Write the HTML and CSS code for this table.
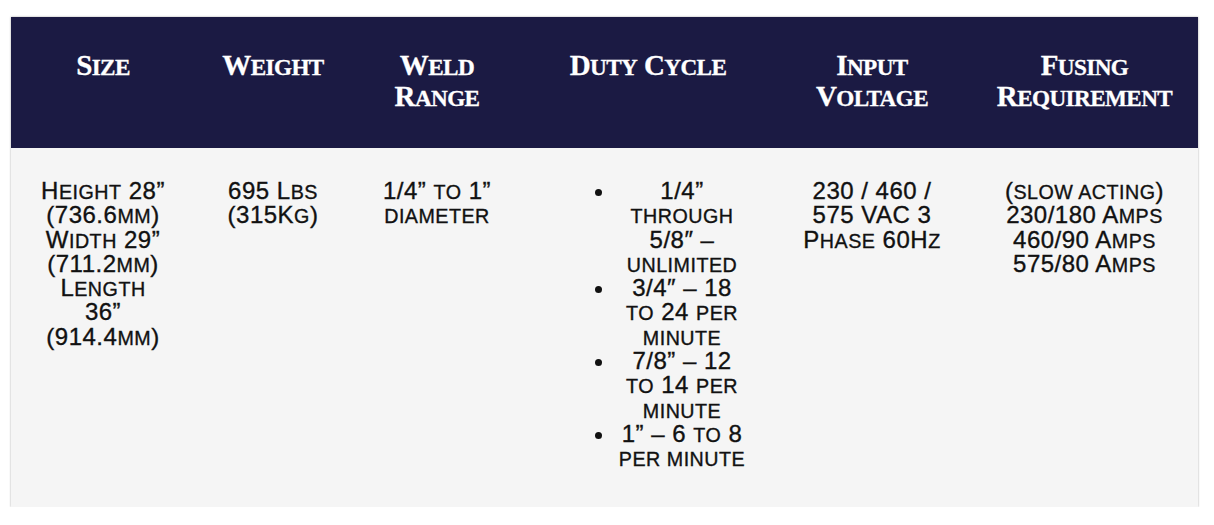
FILE: index.html
```html
<!DOCTYPE html>
<html lang="en">
<head>
<meta charset="utf-8">
<title>Specifications</title>
<link rel="stylesheet" href="styles.css">
</head>
<body>
<table class="spec">
  <colgroup>
    <col class="c-size">
    <col class="c-weight">
    <col class="c-range">
    <col class="c-duty">
    <col class="c-volt">
    <col class="c-fuse">
  </colgroup>
  <thead>
    <tr>
      <th>S<span class="sm">ize</span></th>
      <th>W<span class="sm">eight</span></th>
      <th>W<span class="sm">eld</span> R<span class="sm">ange</span></th>
      <th>D<span class="sm">uty</span> C<span class="sm">ycle</span></th>
      <th>I<span class="sm">nput</span> V<span class="sm">oltage</span></th>
      <th>F<span class="sm">using</span> R<span class="sm">equirement</span></th>
    </tr>
  </thead>
  <tbody>
    <tr>
      <td class="size">H<span class="sm">eight</span> 28” (736.6<span class="sm">mm</span>) W<span class="sm">idth</span> 29” (711.2<span class="sm">mm</span>) L<span class="sm">ength</span> 36” (914.4<span class="sm">mm</span>)</td>
      <td>695 L<span class="sm">bs</span> (315K<span class="sm">g</span>)</td>
      <td>1/4” <span class="sm">to</span> 1” <span class="sm">diameter</span></td>
      <td class="duty">
        <ul class="duty-list">
          <li>1/4” <span class="sm">through</span> 5/8″ – <span class="sm">unlimited</span></li>
          <li>3/4″ – 18 <span class="sm">to</span> 24 <span class="sm">per minute</span></li>
          <li>7/8” – 12 <span class="sm">to</span> 14 <span class="sm">per minute</span></li>
          <li>1” – 6 <span class="sm">to</span> 8 <span class="sm">per minute</span></li>
        </ul>
      </td>
      <td class="volt">230 / 460 / 575 VAC 3 P<span class="sm">hase</span> 60H<span class="sm">z</span></td>
      <td>(<span class="sm">slow acting</span>) 230/180 A<span class="sm">mps</span> 460/90 A<span class="sm">mps</span> 575/80 A<span class="sm">mps</span></td>
    </tr>
  </tbody>
</table>
</body>
</html>
```

FILE: styles.css
```css
* {
  box-sizing: border-box;
}

html,
body {
  margin: 0;
  background: #ffffff;
}

body {
  padding: 17px 16px 0 11px;
}

.spec {
  width: 1187px;
  border-collapse: collapse;
  table-layout: fixed;
  box-shadow: 0 0 2px rgba(0, 0, 0, 0.35);
}

.c-size { width: 184px; }
.c-weight { width: 156px; }
.c-range { width: 172px; }
.c-duty { width: 250px; }
.c-volt { width: 198px; }
.c-fuse { width: 227px; }

.spec th {
  background: #1b1a43;
  color: #ffffff;
  font-family: "Liberation Serif", "Times New Roman", serif;
  font-weight: bold;
  font-size: 29px;
  line-height: 31px;
  letter-spacing: -0.6px;
  padding: 33px 12px 36px;
  vertical-align: top;
  text-align: center;
  -webkit-text-stroke: 0.3px #ffffff;
}

.spec th .sm {
  font-size: 0.8em;
}

.sm {
  text-transform: uppercase;
  font-size: 0.82em;
  line-height: 1;
}

.spec td {
  background: #f5f5f5;
  color: #111111;
  font-family: "Liberation Sans", Arial, sans-serif;
  font-size: 24px;
  line-height: 24.3px;
  letter-spacing: 0.5px;
  padding: 31px 20px 36px;
  vertical-align: top;
  text-align: center;
  -webkit-text-stroke: 0.35px #111111;
}

.spec td.size {
  padding-left: 28px;
  padding-right: 28px;
}

.spec td.volt {
  padding-left: 22px;
  padding-right: 22px;
}

.spec td.duty {
  padding-left: 25px;
  padding-right: 25px;
}

.duty-list {
  margin: 0;
  padding: 0 0 0 68px;
  list-style: disc outside;
}
```
